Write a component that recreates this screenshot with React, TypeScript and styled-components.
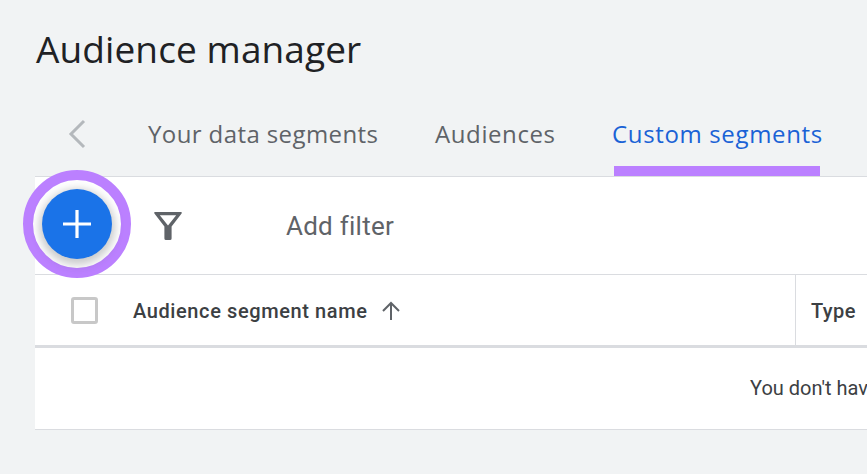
import React from "react";
import styled, { createGlobalStyle } from "styled-components";

const GlobalStyle = createGlobalStyle`
  html, body {
    margin: 0;
    padding: 0;
    width: 867px;
    height: 474px;
    overflow: hidden;
    background: #f1f3f4;
  }
`;

const Page = styled.div`
  width: 867px;
  height: 474px;
  overflow: hidden;
  padding-left: 35px;
  box-sizing: border-box;
  display: flex;
  flex-direction: column;
`;

const Title = styled.h1`
  margin: 0;
  height: 100px;
  padding: 25px 0 0 1px;
  box-sizing: border-box;
  font: 400 37px/48px "Open Sans", sans-serif;
  color: #202124;
  letter-spacing: 0.1px;
  white-space: nowrap;
`;

const TabBar = styled.div`
  display: flex;
  height: 76px;
  align-items: stretch;
`;

const BackButton = styled.div`
  width: 113px;
  padding-left: 32px;
  box-sizing: border-box;
  display: flex;
  align-items: flex-start;
  padding-top: 19px;
`;

const Tab = styled.div<{ $active?: boolean; $width: number; $spacing: number }>`
  position: relative;
  width: ${(p) => p.$width}px;
  flex: none;
  padding-top: 18px;
  box-sizing: border-box;
  font: 400 24px/32px "Open Sans", sans-serif;
  letter-spacing: ${(p) => p.$spacing}px;
  color: ${(p) => (p.$active ? "#1a62d6" : "#5f6368")};
  white-space: nowrap;

  ${(p) =>
    p.$active &&
    `
    &::after {
      content: "";
      position: absolute;
      left: 2px;
      bottom: 0;
      width: 206px;
      height: 10px;
      background: #bb80ff;
    }
  `}
`;

const Card = styled.div`
  background: #fff;
  border-top: 1px solid #dadce0;
  border-bottom: 1px solid #dadce0;
  width: 832px;
  height: 254px;
  box-sizing: border-box;
  display: flex;
  flex-direction: column;
  flex: none;
`;

const Toolbar = styled.div`
  height: 97px;
  flex: none;
  display: flex;
  align-items: center;
  border-bottom: 1px solid #dadce0;
  box-sizing: content-box;
`;

const FabRing = styled.div`
  position: relative;
  z-index: 1;
  flex: none;
  width: 108px;
  height: 108px;
  margin-left: -12px;
  margin-top: -4px;
  border: 10px solid #bb80ff;
  border-radius: 50%;
  box-sizing: border-box;
  background: #fff;
  display: flex;
  align-items: center;
  justify-content: center;
`;

const Fab = styled.button`
  width: 70px;
  height: 70px;
  padding: 0;
  border: none;
  border-radius: 50%;
  background: #1a73e8;
  box-shadow: 0 3px 8px 3px rgba(60, 64, 67, 0.28);
  display: flex;
  align-items: center;
  justify-content: center;
`;

const FilterIcon = styled.svg`
  flex: none;
  margin-left: 22px;
`;

const FilterLabel = styled.span`
  margin-left: 103px;
  font: 400 26px/32px Roboto, sans-serif;
  letter-spacing: 0.25px;
  color: #5f6368;
`;

const HeaderRow = styled.div`
  height: 70px;
  flex: none;
  display: flex;
  align-items: stretch;
  border-bottom: 3px solid #dadce0;
`;

const CheckCell = styled.div`
  width: 98px;
  flex: none;
  display: flex;
  align-items: center;
  padding-left: 36px;
  box-sizing: border-box;
`;

const Checkbox = styled.div`
  width: 27px;
  height: 27px;
  box-sizing: border-box;
  border: 3px solid #c8c8c8;
  border-radius: 3px;
`;

const NameCell = styled.div`
  width: 663px;
  flex: none;
  display: flex;
  align-items: center;
  gap: 13px;
  padding-top: 2px;
  border-right: 1px solid #dadce0;
  box-sizing: border-box;
  font: 500 20px/28px Roboto, sans-serif;
  letter-spacing: 0.6px;
  color: #3c4043;
  white-space: nowrap;
`;

const SortArrow = styled.svg`
  flex: none;
`;

const TypeCell = styled.div`
  display: flex;
  align-items: center;
  padding-left: 15px;
  padding-top: 2px;
  font: 500 20px/28px Roboto, sans-serif;
  letter-spacing: 0.4px;
  color: #3c4043;
`;

const EmptyRow = styled.div`
  flex: 1;
  padding: 26px 0 0 715px;
  font: 400 20px/28px Roboto, sans-serif;
  color: #3c4043;
  white-space: nowrap;
  overflow: hidden;
`;

export default function App() {
  return (
    <Page>
      <GlobalStyle />
      <Title>Audience manager</Title>
      <TabBar>
        <BackButton>
          <svg width="20" height="30" viewBox="0 0 20 30" fill="none">
            <path d="M17 2 L4 15 L17 28" stroke="#b4b8bc" strokeWidth="3" />
          </svg>
        </BackButton>
        <Tab $width={287} $spacing={0.4}>Your data segments</Tab>
        <Tab $width={177} $spacing={0.6}>Audiences</Tab>
        <Tab $active $width={254} $spacing={0.65}>Custom segments</Tab>
      </TabBar>
      <Card>
        <Toolbar>
          <FabRing>
            <Fab>
              <svg width="30" height="30" viewBox="0 0 30 30">
                <path d="M15 1 V29 M1 15 H29" stroke="#fff" strokeWidth="3.2" />
              </svg>
            </Fab>
          </FabRing>
          <FilterIcon width="30" height="30" viewBox="0 0 30 30">
            <path
              fillRule="evenodd"
              fill="#5f6368"
              d="M2 1 H28 Q29.5 1 28.6 2.5 L18.6 15.5 V27.5 Q18.6 29 17 29 H13 Q11.4 29 11.4 27.5 V15.5 L1.4 2.5 Q0.5 1 2 1 Z M6.8 4.2 L15 14.6 L23.2 4.2 Z"
            />
          </FilterIcon>
          <FilterLabel>Add filter</FilterLabel>
        </Toolbar>
        <HeaderRow>
          <CheckCell>
            <Checkbox />
          </CheckCell>
          <NameCell>
            Audience segment name
            <SortArrow width="20" height="20" viewBox="0 0 20 20" fill="none">
              <path d="M10 19 V2 M2 10 L10 2 L18 10" stroke="#5f6368" strokeWidth="2" />
            </SortArrow>
          </NameCell>
          <TypeCell>Type</TypeCell>
        </HeaderRow>
        <EmptyRow>You don't have any custom segments</EmptyRow>
      </Card>
    </Page>
  );
}
